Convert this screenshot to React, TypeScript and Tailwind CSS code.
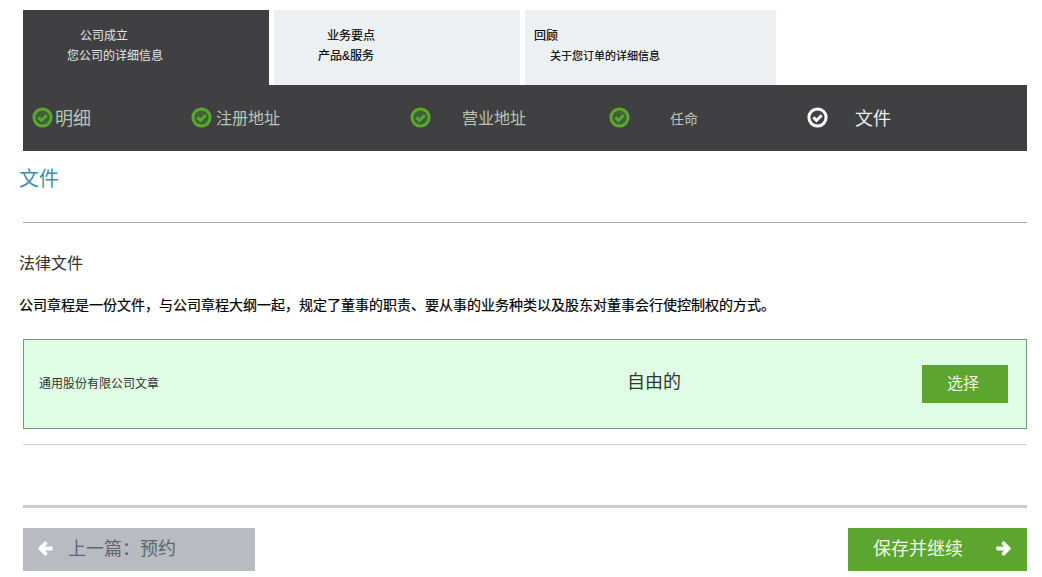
import { FaArrowLeft, FaArrowRight } from "react-icons/fa";

const FONT = "font-['Liberation_Sans','Noto_Sans_CJK_SC',sans-serif]";

type Step = { label: string; itemClass: string; textClass: string; active?: boolean };

const STEPS: Step[] = [
  { label: "明细", itemClass: "w-[168px] pl-[9px]", textClass: "ml-[2px] text-lg" },
  { label: "注册地址", itemClass: "w-[219px]", textClass: "ml-[4px] text-base" },
  { label: "营业地址", itemClass: "w-[199px]", textClass: "ml-[31px] text-base" },
  { label: "任命", itemClass: "w-[198px]", textClass: "ml-[40px] text-sm" },
  { label: "文件", itemClass: "flex-1", textClass: "ml-[27px] text-lg text-[#eeeeee]", active: true },
];

function CheckBadge({ active }: { active?: boolean }) {
  return (
    <svg
      viewBox="0 0 21 21"
      className={`h-[21px] w-[21px] shrink-0 -translate-y-[1px] ${active ? "text-white" : "text-[#5ca52f]"}`}
      fill="none"
      stroke="currentColor"
    >
      <circle cx="10.5" cy="10.5" r="8.6" strokeWidth="3" fill={active ? "#404142" : "#3f6138"} />
      <path d="M6.4 10.4l3.1 3.1 5.2-5.2" strokeWidth="3" />
    </svg>
  );
}

export default function App() {
  return (
    <div className={`${FONT} w-[1042px] h-[577px] overflow-hidden bg-white pt-[10px] pl-[23px] pr-[15px]`}>
      <div className="flex h-[75px] gap-[5px] text-xs leading-[20px]">
        <div className="w-[246px] bg-[#404042] pt-[16px] text-[#e6e6e6]">
          <div className="pl-[57px]">公司成立</div>
          <div className="pl-[44px]">您公司的详细信息</div>
        </div>
        <div className="w-[246px] bg-[#edf0f3] pt-[16px] text-black [-webkit-text-stroke:0.15px_black]">
          <div className="pl-[53px]">业务要点</div>
          <div className="pl-[44px]">产品&amp;服务</div>
        </div>
        <div className="w-[251px] bg-[#edf0f3] pt-[16px] text-black [-webkit-text-stroke:0.15px_black]">
          <div className="pl-[9px]">回顾</div>
          <div className="pl-[25px] text-[11px]">关于您订单的详细信息</div>
        </div>
      </div>

      <div className="flex h-[66px] items-center bg-[#404042]">
        {STEPS.map((step) => (
          <div key={step.label} className={`flex items-center ${step.itemClass}`}>
            <CheckBadge active={step.active} />
            <span className={`pt-[2px] text-[#b9c4b6] ${step.textClass}`}>{step.label}</span>
          </div>
        ))}
      </div>

      <h1 className="-ml-1 mt-[14px] text-xl leading-[28px] font-normal text-[#3f8fa8]">文件</h1>
      <div className="mt-[29px] border-t border-[#aaaaaa]" />

      <h2 className="-ml-1 mt-[29px] text-base leading-[24px] font-normal text-[#333333]">法律文件</h2>
      <p className="-ml-1 mt-[18px] text-sm leading-[22px] font-normal text-black [-webkit-text-stroke:0.2px_black]">
        公司章程是一份文件，与公司章程大纲一起，规定了董事的职责、要从事的业务种类以及股东对董事会行使控制权的方式。
      </p>

      <div className="mt-[23px] flex h-[90px] items-center border border-[#6f9a80] bg-[#dffde4] pl-[15px] pr-[18px]">
        <span className="w-[588px] text-xs text-[#333333]">通用股份有限公司文章</span>
        <span className="flex-1 -translate-y-[2px] text-lg text-[#333333]">自由的</span>
        <button className="h-[38px] w-[86px] bg-[#5ca52f] pr-[4px] text-base text-[#eef7e6]">选择</button>
      </div>

      <div className="mt-[15px] border-t border-[#d0d0d0]" />
      <div className="mt-[60px] border-t-[3px] border-[#cccccc]" />

      <div className="mt-[20px] flex justify-between">
        <button className="flex h-[43px] w-[232px] items-center bg-[#b8bbc0] pb-[2px] pl-[15px] text-lg text-[#5f6670]">
          <FaArrowLeft className="h-[15px] w-[15px] text-white" stroke="currentColor" strokeWidth={50} />
          <span className="ml-[15px]">上一篇：预约</span>
        </button>
        <button className="flex h-[43px] w-[179px] items-center bg-[#5ca52f] pb-[2px] pl-[25px] text-lg text-[#eef7e6]">
          <span>保存并继续</span>
          <FaArrowRight className="ml-[33px] h-[15px] w-[15px] text-white" stroke="currentColor" strokeWidth={50} />
        </button>
      </div>
    </div>
  );
}
